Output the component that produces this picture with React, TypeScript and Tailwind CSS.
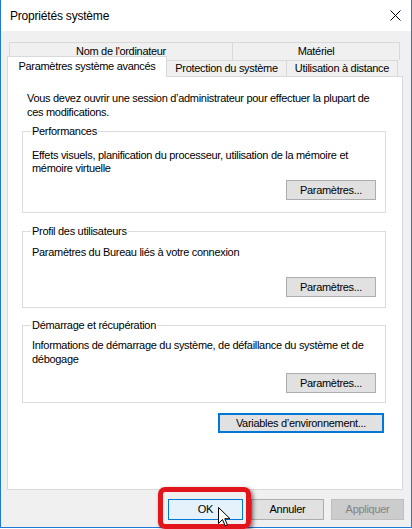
import type { ReactNode } from "react";

const font = { fontFamily: '"Liberation Sans", Arial, sans-serif' };

function WinButton({
  children,
  className = "",
}: {
  children: ReactNode;
  className?: string;
}) {
  return (
    <div
      className={`flex h-[20px] items-center justify-center whitespace-nowrap border border-[#adadad] bg-[#e1e1e1] text-black ${className}`}
    >
      {children}
    </div>
  );
}

function GroupBox({
  title,
  children,
  className = "",
}: {
  title: string;
  children: ReactNode;
  className?: string;
}) {
  return (
    <fieldset
      className={`ml-[14px] w-[364px] border border-[#dcdcdc] ${className}`}
    >
      <legend className="ml-[8px] px-[1px] leading-[14px] text-black">
        {title}
      </legend>
      {children}
    </fieldset>
  );
}

function CloseIcon() {
  return (
    <svg width="11" height="11" viewBox="0 0 11 11" className="block">
      <path d="M0.5 0.5 L10.5 10.5 M10.5 0.5 L0.5 10.5" stroke="#000" strokeWidth="1" />
    </svg>
  );
}

function Cursor() {
  return (
    <svg width="13" height="20" viewBox="0 0 13 20" className="block">
      <path
        d="M0.5 0.5 L0.5 16.5 L4.5 12.5 L7.2 18.8 L9.4 17.8 L6.8 11.7 L12 11.7 Z"
        fill="#fff"
        stroke="#000"
        strokeWidth="1"
        strokeLinejoin="miter"
      />
    </svg>
  );
}

export default function App() {
  return (
    <div
      className="relative h-[529px] w-[412px] overflow-hidden whitespace-nowrap bg-white text-[11px] tracking-[-0.3px]"
      style={font}
    >
      <div className="flex h-[528px] w-[412px] flex-col border-x border-b border-[#1f7ad6] bg-[#f0f0f0]">
        {/* title bar */}
        <div className="flex h-[31px] items-center justify-between bg-white pl-[9px] pr-[10px]">
          <span className="text-[12px] tracking-[-0.2px] text-black">Propriétés système</span>
          <CloseIcon />
        </div>

        <div className="flex flex-1 flex-col pl-[6px] pt-[11px]">
          {/* tabs, back row */}
          <div className="ml-[2px] flex h-[18px] text-black">
            <div className="flex w-[223px] items-center justify-center border-l border-t border-[#d9d9d9]">
              Nom de l&apos;ordinateur
            </div>
            <div className="flex w-[168px] items-center justify-center border-x border-t border-[#d9d9d9]">
              Matériel
            </div>
          </div>
          {/* tabs, front row */}
          <div className="flex h-[17px] items-end text-black">
            <div className="relative z-10 flex h-[21px] w-[160px] items-center justify-center border-x border-t border-[#d9d9d9] bg-white pb-[1px]">
              Paramètres système avancés
            </div>
            <div className="flex h-[16px] w-[120px] items-center justify-center self-start border-r border-t border-[#d9d9d9]">
              Protection du système
            </div>
            <div className="flex h-[16px] w-[111px] items-center justify-center self-start border-r border-t border-[#d9d9d9]">
              Utilisation à distance
            </div>
          </div>

          {/* panel */}
          <div className="-mt-px flex h-[414px] w-[396px] flex-col border border-[#d9d9d9] bg-white text-black">
            <p className="pl-[19px] pt-[14px] leading-[14px]">
              Vous devez ouvrir une session d’administrateur pour effectuer la plupart de
              <br />
              ces modifications.
            </p>

            <GroupBox title="Performances" className="mt-[5px]">
              <p className="mt-[11px] pl-[9px] leading-[13px]">
                Effets visuels, planification du processeur, utilisation de la mémoire et
                <br />
                mémoire virtuelle
              </p>
              <div className="flex justify-end pb-[12px] pr-[9px] pt-[5px]">
                <WinButton className="w-[90px]">Paramètres...</WinButton>
              </div>
            </GroupBox>

            <GroupBox title="Profil des utilisateurs" className="mt-[11px]">
              <p className="mt-[8px] pl-[9px] leading-[13px]">
                Paramètres du Bureau liés à votre connexion
              </p>
              <div className="flex justify-end pb-[10px] pr-[9px] pt-[18px]">
                <WinButton className="w-[90px]">Paramètres...</WinButton>
              </div>
            </GroupBox>

            <GroupBox title="Démarrage et récupération" className="mt-[10px]">
              <p className="mt-[6px] pl-[9px] leading-[14px]">
                Informations de démarrage du système, de défaillance du système et de
                <br />
                débogage
              </p>
              <div className="flex justify-end pb-[9px] pr-[9px] pt-[7px]">
                <WinButton className="w-[90px]">Paramètres...</WinButton>
              </div>
            </GroupBox>

            <div className="mt-[10px] flex justify-end pr-[18px]">
              <div className="flex h-[20px] w-[166px] items-center justify-center border-2 border-[#0078d7] bg-[#e1e1e1]">
                Variables d’environnement...
              </div>
            </div>
          </div>

          {/* bottom buttons */}
          <div className="mt-[9px] flex">
            <div className="ml-[161px] flex h-[21px] w-[75px] items-center justify-center border border-[#0078d7] bg-[#e5f1fb] text-black">
              OK
            </div>
            <WinButton className="ml-[8px] !h-[21px] w-[73px]">Annuler</WinButton>
            <div className="ml-[7px] flex h-[21px] w-[73px] items-center justify-center border border-[#bfbfbf] bg-[#cccccc] text-[#838383]">
              Appliquer
            </div>
          </div>
        </div>
      </div>

      {/* annotation around OK */}
      <div className="absolute left-[158px] top-[487px] h-[42px] w-[93px] rounded-[7px] border-[5px] border-[#e2151d] shadow-[2px_2px_4px_rgba(0,0,0,0.55)]" />
      <div className="absolute left-[218px] top-[507px]">
        <Cursor />
      </div>
    </div>
  );
}
